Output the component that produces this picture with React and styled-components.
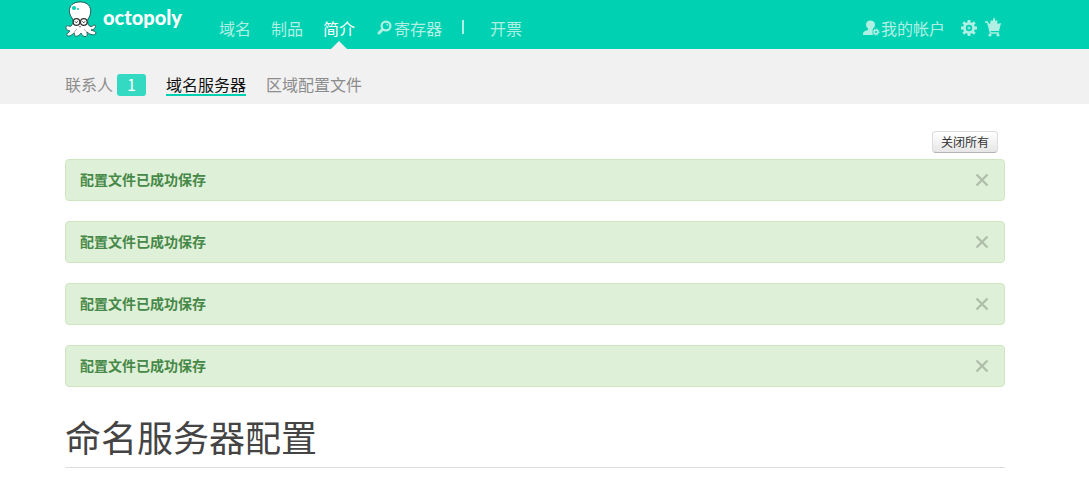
import {useState} from "react";
import styled, {createGlobalStyle} from "styled-components";

const GlobalStyle = createGlobalStyle`
  body {
    margin: 0;
    background: #fff;
    color: #444;
    font-family: "Noto Sans CJK SC", sans-serif;
    font-size: 14px;
    line-height: 20px;
  }
`

const Bar = styled.div`
  padding-right: 19px;
  background: ${props => props.$background};
`

const Container = styled.div`
  max-width: 940px;
  margin: 0 auto;
`

const HeaderRow = styled(Container)`
  display: flex;
  align-items: stretch;
  height: 49px;
`

const Brand = styled.a`
  display: flex;
  align-items: flex-start;
  gap: 6px;
  width: 154px;
  color: #fff;
  text-decoration: none;
`

const Wordmark = styled.span`
  font-family: Lato, "Liberation Sans", sans-serif;
  font-size: 20px;
  font-weight: 900;
  line-height: 34px;
`

const MainNav = styled.nav`
  display: flex;
  flex: 1;
  gap: 20px;
`

const NavLink = styled.a`
  position: relative;
  display: flex;
  align-items: center;
  gap: 2px;
  padding-top: 6px;
  color: ${props => props.$active ? "#fff" : "#b0f0e4"};
  font-size: 16px;
  text-decoration: none;

  &::after {
    content: "";
    display: ${props => props.$active ? "block" : "none"};
    position: absolute;
    bottom: 0;
    left: 50%;
    margin-left: -8px;
    border: 8px solid transparent;
    border-top: 0;
    border-bottom-color: #f1f1f1;
  }
`

const Divider = styled.span`
  width: 2px;
  height: 14px;
  margin: 20px 6px 0 0;
  background: #b0f0e4;
`

const Tools = styled.div`
  display: flex;
  gap: 8px;
  padding-right: 3px;
`

const Account = styled(NavLink)`
  gap: 1px;
  margin-right: 8px;
`

const SubNav = styled(Container)`
  display: flex;
  align-items: flex-start;
  gap: 20px;
  height: 30px;
  padding: 25px 0 0;
`

const SubLink = styled.a`
  display: flex;
  gap: 4px;
  border-bottom: 2px solid ${props => props.$active ? "#00d1b2" : "transparent"};
  color: ${props => props.$active ? "#111" : "#8c8c8c"};
  font-size: 16px;
  line-height: 20px;
  text-decoration: none;
`

const Badge = styled.span`
  width: 29px;
  height: 22px;
  border-radius: 3px;
  background: #33d9c0;
  color: #fff;
  text-align: center;
`

const Content = styled(Container)`
  display: flex;
  flex-direction: column;
  padding-top: 27px;
`

const CloseAll = styled.button`
  align-self: flex-end;
  height: 22px;
  margin: 0 7px 6px 0;
  padding: 0 8px;
  border: 1px solid #dcdcdc;
  border-bottom-color: #b3b3b3;
  border-radius: 4px;
  background: linear-gradient(#fff, #e6e6e6);
  color: #333;
  font-family: inherit;
  font-size: 12px;
  line-height: 18px;
`

const Alert = styled.div`
  display: flex;
  align-items: center;
  justify-content: space-between;
  margin-bottom: 20px;
  padding: 9px 14px;
  border: 1px solid #d0e6c2;
  border-radius: 4px;
  background: #dff0d8;
  color: #468847;
`

const Message = styled.strong`
  padding-bottom: 2px;
`

const Dismiss = styled.button`
  display: flex;
  padding: 1px;
  border: 0;
  background: none;
  color: #b0bfab;
`

const Title = styled.h1`
  margin: 7px 0 0;
  padding-bottom: 9px;
  border-bottom: 1px solid #ddd;
  color: #444;
  font-size: 36px;
  font-weight: normal;
  line-height: 44px;
`

const Octopus = () => (
    <svg width="32" height="38" viewBox="0 0 32 38" aria-hidden="true">
        <path
            d="M7 18C3 13 4 7 7 4.500C11 1 20 1 23.500 5C27 9 26 15 23 19C22 23 23 26 26 26.500C28 26.500 28 24.500 30 25C31.500 27 29 30 26 30C28 31 31 31 31 33C30 36 25 35 22 32C22 34 23 35 21 36.500C18 37 17 35 16 33C15 35 12 37 10 36C9 35 10 34 9 33C7 35 4 37 2 35.500C1 33 4 33 5 31C2 31 0 28 1.500 26C3 25 4 27 6 26C8 24 9 21 7 18z"
            fill="#fff" stroke="#285c58" strokeWidth="1"
        />
        <circle cx="9" cy="8" r="2" fill="#00d1b2"/>
        <circle cx="13" cy="9" r="1" fill="#00d1b2"/>
        <g fill="#fff" stroke="#333" strokeWidth="1.2">
            <circle cx="11.500" cy="22" r="3.300"/>
            <circle cx="18.800" cy="22" r="3.300"/>
        </g>
        <path d="M10 21.300l1.400 1.500 1.400-1.500M17.400 21.300l1.400 1.500 1.400-1.500" fill="none" stroke="#333"/>
        <path d="M14 27q1-1 2 0" fill="none" stroke="#777"/>
        <path d="M9 33q1-3 3-4M22 32q-2-1-3-3" fill="none" stroke="#999" strokeWidth=".8"/>
    </svg>
)

const SearchIcon = () => (
    <svg width="17" height="16" viewBox="-2 0 17 16" fill="none" stroke="currentColor" aria-hidden="true">
        <circle cx="9" cy="6" r="4.400" strokeWidth="2.200"/>
        <path d="M5.500 9.500L2 13" strokeWidth="3" strokeLinecap="round"/>
        <path d="M9 4q2 0 2 2" strokeWidth="1"/>
    </svg>
)

const UserIcon = () => (
    <svg width="17" height="16" viewBox="0 0 17 16" fill="currentColor" aria-hidden="true">
        <path d="M3 4.500C3-1 12-1 12 4.500C12 7 11 7.500 10 8.500C9.500 10 9 12 10 15H0C0 12 1 11 5 10V8.500C4 7.500 3 7 3 4.500z"/>
        <circle cx="13" cy="12" r="1.900" fill="none" stroke="currentColor" strokeWidth="1.700"/>
        <circle cx="13" cy="12" r="3.200" fill="none" stroke="currentColor" strokeWidth="1" strokeDasharray="1.250 1.250"/>
    </svg>
)

const GearIcon = () => (
    <svg width="16" height="16" viewBox="0 0 16 16" fill="none" stroke="currentColor" aria-hidden="true">
        <circle cx="8" cy="8" r="4.600" strokeWidth="2.800"/>
        <path
            d="M8 0v3M8 13v3M0 8h3M13 8h3M2.300 2.300l2.200 2.200M11.500 11.500l2.200 2.200M13.700 2.300l-2.200 2.200M4.500 11.500l-2.200 2.200"
            strokeWidth="2.800"
        />
        <circle cx="8" cy="8" r="1" strokeWidth="1"/>
    </svg>
)

const CartIcon = () => (
    <svg width="17" height="22" viewBox="0 0 17 22" fill="currentColor" aria-hidden="true">
        <path d="M3 6l2 1 1-4 1.500 1L9 0l1.500 4L12 3l.5 4 3.500-1-2 8H5z"/>
        <path d="M0 5h2.500l3 11H14" fill="none" stroke="currentColor" strokeWidth="1.300"/>
        <circle cx="5" cy="18" r="1.600"/>
        <circle cx="13" cy="18" r="1.600"/>
    </svg>
)

const CrossIcon = () => (
    <svg width="14" height="14" viewBox="0 0 14 14" stroke="currentColor" strokeWidth="2.400" aria-hidden="true">
        <path d="M1.500 1.500l11 11M12.500 1.500l-11 11"/>
    </svg>
)

const App = () => {
    const [alerts, setAlerts] = useState([1, 2, 3, 4])
    const dismiss = id => setAlerts(alerts.filter(alert => alert !== id))

    return (
        <>
            <GlobalStyle/>
            <Bar as="header" $background="#00d1b2">
                <HeaderRow>
                    <Brand href="#">
                        <Octopus/>
                        <Wordmark>octopoly</Wordmark>
                    </Brand>
                    <MainNav>
                        <NavLink href="#">域名</NavLink>
                        <NavLink href="#">制品</NavLink>
                        <NavLink href="#" $active>简介</NavLink>
                        <NavLink href="#"><SearchIcon/>寄存器</NavLink>
                        <Divider/>
                        <NavLink href="#">开票</NavLink>
                    </MainNav>
                    <Tools>
                        <Account href="#"><UserIcon/>我的帐户</Account>
                        <NavLink href="#" aria-label="设置"><GearIcon/></NavLink>
                        <NavLink href="#" aria-label="购物车"><CartIcon/></NavLink>
                    </Tools>
                </HeaderRow>
            </Bar>
            <Bar $background="#f1f1f1">
                <SubNav as="nav">
                    <SubLink href="#">联系人<Badge>1</Badge></SubLink>
                    <SubLink href="#" $active>域名服务器</SubLink>
                    <SubLink href="#">区域配置文件</SubLink>
                </SubNav>
            </Bar>
            <Bar as="main" $background="#fff">
                <Content>
                    <CloseAll type="button" onClick={() => setAlerts([])}>关闭所有</CloseAll>
                    {alerts.map(id => (
                        <Alert key={id}>
                            <Message>配置文件已成功保存</Message>
                            <Dismiss type="button" aria-label="关闭" onClick={() => dismiss(id)}>
                                <CrossIcon/>
                            </Dismiss>
                        </Alert>
                    ))}
                    <Title>命名服务器配置</Title>
                </Content>
            </Bar>
        </>
    )
}

export default App;
